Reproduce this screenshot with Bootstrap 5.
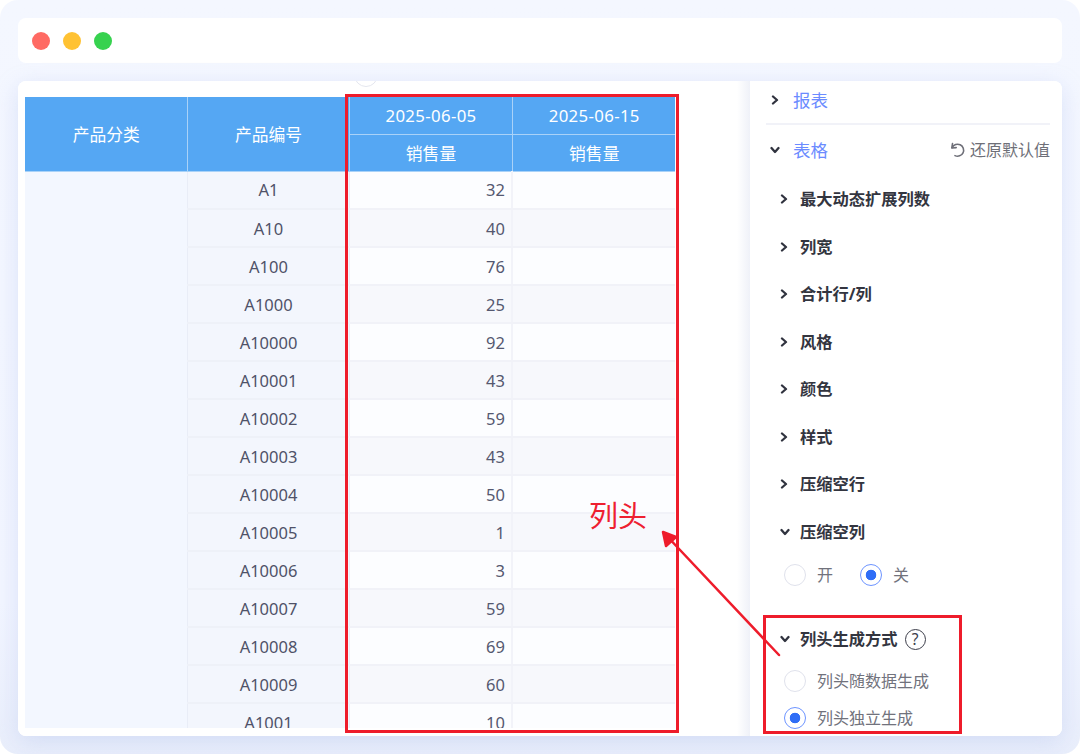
<!DOCTYPE html>
<html lang="zh"><head><meta charset="utf-8"><title>列头</title>
<link href="https://cdn.jsdelivr.net/npm/bootstrap@5.3.0/dist/css/bootstrap.min.css" rel="stylesheet">
<style>
html,body{height:754px;overflow:hidden;background:#fff}
body{font-family:"Noto Sans","Noto Sans CJK SC",sans-serif;color:#4f5268}
.shell{position:relative;width:1080px;height:754px;padding:18px;gap:18px;background:linear-gradient(180deg,#f4f7ff 0,#f2f5ff 80%,#e9eefb 100%);border-radius:18px;overflow:hidden}
.topbar{height:45px;background:#fff;border-radius:8px;padding-left:14px;gap:13px;flex:none}
.dot{width:18px;height:18px;border-radius:50%}
.d-red{background:#ff6a63}.d-yel{background:#ffc233}.d-grn{background:#37d24f}
.mainbox{height:655px;background:#fff;border-radius:8px;overflow:hidden;box-shadow:0 6px 22px rgba(170,185,235,.35)}
.leftpane{width:719px;flex:none;padding:16px 0 8px 7px;position:relative;background:#fff}
.tiny-circle{position:absolute;left:336px;top:-18px;width:24px;height:24px;border:1px solid #e4e6ee;border-radius:50%;background:#fff}
.clipper{height:631px;width:650px;overflow:hidden}
.gridtable{table-layout:fixed;width:650px;margin:0;border-collapse:collapse;font-size:16.5px}
.gridtable th,.gridtable td{height:38px;padding:2px 6px 0 7px;vertical-align:middle;text-align:center;font-weight:400;border:0}
.gridtable th{height:37px;font-size:16.8px;background:#55a7f3;color:#fff;border:1px solid #a9d2f8;border-top:0;border-left:0}
.gridtable th.date-h{letter-spacing:.35px;padding-top:0}
.gridtable th.h-end{border-right:0}
.gridtable td.side{background:#f3f7ff;border-right:1px solid #e9edf7;vertical-align:top}
.gridtable td.code{background:#f3f6fd;border-bottom:2px solid #eef1f8;border-right:1px solid #e9edf7;color:#4f5268}
.gridtable td.num{text-align:right;border-bottom:2px solid #f1f2f8;border-right:2px solid #f2f3f9;color:#555870}
.gridtable td.num:last-child{border-right:0}
.gridtable tr.odd td.num{background:#fcfdff}
.gridtable tr.even td.num{background:#f7f8fc}
.gutter{width:13px;flex:none;background:linear-gradient(90deg,#fff 0,#eff1f8 100%)}
.sidepanel{flex:1;background:#fff;overflow:hidden;padding:0 12px 0 16px;font-size:17.5px}
.sec{height:38px;color:#6b8bff}
.sec-first{height:42px;padding-bottom:4px}
.sec-sep{height:2px;background:#f1f2f8;margin-bottom:5px}
.sec2{height:40px}
.sec-name{margin-left:7px}
.chev{width:8px;height:10px;flex:none;fill:none;stroke:#30333f;stroke-width:2.3;stroke-linecap:round;stroke-linejoin:round}
.chev-down{width:10px;height:8px}
.secicon{width:20px;padding-left:5px}
.secicon-d{padding-left:4px}
.restore{color:#6e6f78;font-size:16px}
.restore svg{margin-right:4px}
.sp-a{height:5.5px}
.sp-b{height:20.75px}
.opt{height:47.5px;font-weight:700;font-size:16.25px;color:#33353f;padding-left:14px}
.opt .chev{margin-right:12px}
.opt .chev-down{margin-right:10px}
.radio-row{height:37px;padding-left:18px;color:#71727c;font-size:16px}
.radio-lead{height:39px}
.radio-row .form-check-input{width:22px;height:22px;margin:0 11px 0 0;flex:none;border:1.5px solid #e0e2ec;background-color:#fff;background-image:none}
.radio-row .form-check-input:checked{border-color:#6d94ff;background-image:radial-gradient(circle,#2f6df6 0,#2f6df6 5px,transparent 5.6px);background-color:#fff}
.off-label{margin-right:27px}
.helpmark{width:21px;height:21px;border:1.5px solid #3c3e4a;border-radius:50%;font-size:15.5px;font-weight:400;line-height:18px;text-align:center;margin-left:7px;color:#3c3e4a}
.redbox{position:absolute;border:3px solid #ee1c2b;pointer-events:none}
.rb1{left:345px;top:94px;width:334px;height:639px}
.rb2{left:763px;top:615px;width:199px;height:119px}
.redlabel{position:absolute;left:589px;top:495px;font-size:29px;line-height:42px;color:#ee2030}
.arrowlayer{position:absolute;left:0;top:0;pointer-events:none}
</style></head>
<body>
<div class="shell d-flex flex-column">
  <div class="topbar d-flex align-items-center">
    <span class="dot d-red"></span><span class="dot d-yel"></span><span class="dot d-grn"></span>
  </div>
  <div class="mainbox d-flex">
    <div class="leftpane">
      <span class="tiny-circle"></span>
      <div class="clipper">
      <table class="gridtable">
        <colgroup><col style="width:162px"><col style="width:162px"><col style="width:163px"><col style="width:163px"></colgroup>
        <thead>
        <tr><th rowspan="2">产品分类</th><th rowspan="2">产品编号</th><th class="date-h">2025-06-05</th><th class="date-h h-end">2025-06-15</th></tr>
        <tr><th>销售量</th><th class="h-end">销售量</th></tr>
        </thead>
        <tbody>
        <tr class="odd"><td class="side" rowspan="15"></td><td class="code">A1</td><td class="num">32</td><td class="num"></td></tr>
        <tr class="even"><td class="code">A10</td><td class="num">40</td><td class="num"></td></tr>
        <tr class="odd"><td class="code">A100</td><td class="num">76</td><td class="num"></td></tr>
        <tr class="even"><td class="code">A1000</td><td class="num">25</td><td class="num"></td></tr>
        <tr class="odd"><td class="code">A10000</td><td class="num">92</td><td class="num"></td></tr>
        <tr class="even"><td class="code">A10001</td><td class="num">43</td><td class="num"></td></tr>
        <tr class="odd"><td class="code">A10002</td><td class="num">59</td><td class="num"></td></tr>
        <tr class="even"><td class="code">A10003</td><td class="num">43</td><td class="num"></td></tr>
        <tr class="odd"><td class="code">A10004</td><td class="num">50</td><td class="num"></td></tr>
        <tr class="even"><td class="code">A10005</td><td class="num">1</td><td class="num"></td></tr>
        <tr class="odd"><td class="code">A10006</td><td class="num">3</td><td class="num"></td></tr>
        <tr class="even"><td class="code">A10007</td><td class="num">59</td><td class="num"></td></tr>
        <tr class="odd"><td class="code">A10008</td><td class="num">69</td><td class="num"></td></tr>
        <tr class="even"><td class="code">A10009</td><td class="num">60</td><td class="num"></td></tr>
        <tr class="odd"><td class="code">A1001</td><td class="num">10</td><td class="num"></td></tr>
        </tbody>
      </table>
      </div>
    </div>
    <div class="gutter"></div>
    <div class="sidepanel">
      <div class="sec sec-first d-flex align-items-center"><span class="secicon d-flex"><svg class="chev" viewBox="0 0 8 10"><path d="M2 1.5 6 5 2 8.5"/></svg></span><span class="sec-name">报表</span></div>
      <div class="sec-sep"></div>
      <div class="sec sec2 d-flex align-items-center"><span class="secicon secicon-d d-flex"><svg class="chev chev-down" viewBox="0 0 10 8"><path d="M1.5 2 5 6 8.5 2"/></svg></span><span class="sec-name">表格</span>
        <span class="restore ms-auto d-flex align-items-center"><svg width="16" height="16" viewBox="0 0 16 16" fill="none" stroke="#6e6f78" stroke-width="1.6" stroke-linecap="round" stroke-linejoin="round"><path d="M2.5 1.5 1.8 6 6.2 5.6"/><path d="M2.2 5.6A6 6 0 1 1 5 13.6"/></svg>还原默认值</span>
      </div>
      <div class="sp-a"></div>
      <div class="opt d-flex align-items-center"><svg class="chev" viewBox="0 0 8 10"><path d="M2 1.5 6 5 2 8.5"/></svg>最大动态扩展列数</div>
      <div class="opt d-flex align-items-center"><svg class="chev" viewBox="0 0 8 10"><path d="M2 1.5 6 5 2 8.5"/></svg>列宽</div>
      <div class="opt d-flex align-items-center"><svg class="chev" viewBox="0 0 8 10"><path d="M2 1.5 6 5 2 8.5"/></svg>合计行/列</div>
      <div class="opt d-flex align-items-center"><svg class="chev" viewBox="0 0 8 10"><path d="M2 1.5 6 5 2 8.5"/></svg>风格</div>
      <div class="opt d-flex align-items-center"><svg class="chev" viewBox="0 0 8 10"><path d="M2 1.5 6 5 2 8.5"/></svg>颜色</div>
      <div class="opt d-flex align-items-center"><svg class="chev" viewBox="0 0 8 10"><path d="M2 1.5 6 5 2 8.5"/></svg>样式</div>
      <div class="opt d-flex align-items-center"><svg class="chev" viewBox="0 0 8 10"><path d="M2 1.5 6 5 2 8.5"/></svg>压缩空行</div>
      <div class="opt d-flex align-items-center"><svg class="chev chev-down" viewBox="0 0 10 8"><path d="M1.5 2 5 6 8.5 2"/></svg>压缩空列</div>
      <div class="radio-row radio-lead d-flex align-items-center"><input class="form-check-input" type="radio" name="kong"><span class="off-label">开</span><input class="form-check-input" type="radio" name="kong" checked><span>关</span></div>
      <div class="sp-b"></div>
      <div class="opt d-flex align-items-center"><svg class="chev chev-down" viewBox="0 0 10 8"><path d="M1.5 2 5 6 8.5 2"/></svg>列头生成方式<span class="helpmark">?</span></div>
      <div class="radio-row d-flex align-items-center"><input class="form-check-input" type="radio" name="lie"><span>列头随数据生成</span></div>
      <div class="radio-row d-flex align-items-center"><input class="form-check-input" type="radio" name="lie" checked><span>列头独立生成</span></div>
    </div>
  </div>
  <div class="redbox rb1"></div>
  <div class="redbox rb2"></div>
  <div class="redlabel">列头</div>
  <svg class="arrowlayer" width="1080" height="754" viewBox="0 0 1080 754" fill="none" stroke="#ee1c2b" stroke-width="2.5" stroke-linecap="round" stroke-linejoin="round"><path d="M779 655 664 533"/><path d="M663 532 666 546 676 537Z" fill="#ee1c2b"/></svg>
</div>
<script src="https://cdn.jsdelivr.net/npm/bootstrap@5.3.0/dist/js/bootstrap.bundle.min.js"></script>
</body></html>
